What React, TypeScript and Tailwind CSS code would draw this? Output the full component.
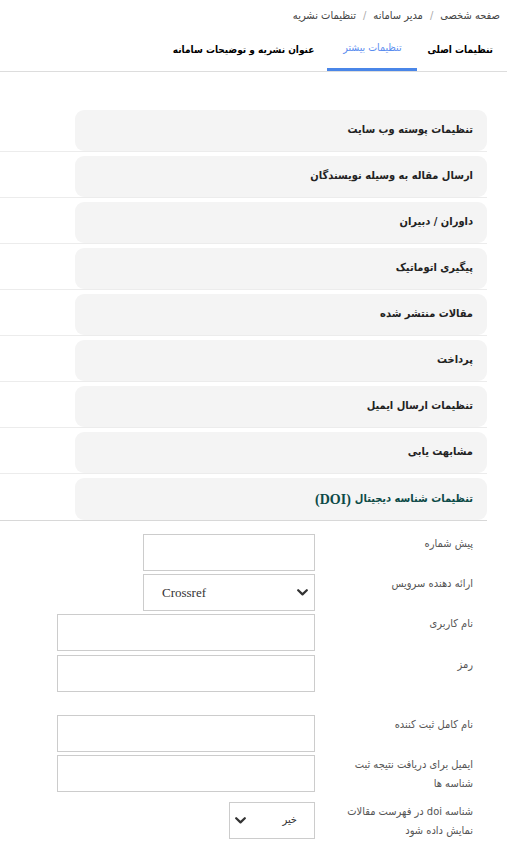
const SECTIONS = [
  'تنظیمات پوسته وب سایت',
  'ارسال مقاله به وسیله نویسندگان',
  'داوران / دبیران',
  'پیگیری اتوماتیک',
  'مقالات منتشر شده',
  'پرداخت',
  'تنظیمات ارسال ایمیل',
  'مشابهت یابی',
]

const font = { fontFamily: '"DejaVu Sans Condensed", "DejaVu Sans", Tahoma, sans-serif' }

function Chevron() {
  return (
    <svg width="11" height="7" viewBox="0 0 11 7" fill="none">
      <path d="M1.2 1.2 5.5 5.4 9.8 1.2" stroke="#333" strokeWidth="2.2" strokeLinecap="round" strokeLinejoin="round" />
    </svg>
  )
}

function Row({ label, children, className = '' }: { label: React.ReactNode; children: React.ReactNode; className?: string }) {
  return (
    <div className={`flex items-start ${className}`}>
      <div className="w-[172px] shrink-0 pr-[14px] pl-[30px] text-[11px] leading-[19px] text-[#555]">{label}</div>
      <div className="flex-1">{children}</div>
    </div>
  )
}

export default function App() {
  return (
    <div dir="rtl" className="w-[507px] min-h-[850px] bg-white text-[#222]" style={font}>
      {/* Breadcrumb */}
      <div className="pr-[7px] pt-[5px] h-[27px] text-[11px] text-[#444] flex items-center gap-[7px]">
        <span>صفحه شخصی</span>
        <span className="text-[#aaa]">/</span>
        <span>مدیر سامانه</span>
        <span className="text-[#aaa]">/</span>
        <span>تنظیمات نشریه</span>
      </div>

      {/* Tabs */}
      <div className="flex border-b border-[#ddd] h-[45px] items-stretch">
        <div className="pr-[14px] pl-[10px] flex items-center text-[10px] font-bold text-black">تنظیمات اصلی</div>
        <div className="w-[90px] flex items-center justify-center text-[10.5px] text-[#5b8def] border-b-[3px] border-[#4a86e8]">
          تنظیمات بیشتر
        </div>
        <div className="px-[13px] flex items-center text-[10px] font-bold text-black">عنوان نشریه و توضیحات سامانه</div>
      </div>

      {/* Sections */}
      <div className="mr-[20px] mt-[38px]">
        {SECTIONS.map(s => (
          <div key={s} className="mb-[4px]">
            <div className="ml-[75px] h-[41px] rounded-[9px] bg-[#f4f4f4] pr-[14px] flex items-center text-[11px] font-bold text-[#222]">
              {s}
            </div>
            <div className="h-px bg-[#ececec]" />
          </div>
        ))}
        <div className="ml-[75px] h-[42px] rounded-[9px] bg-[#f4f4f4] pr-[14px] flex items-center text-[11px] font-bold text-[#0c4a47]">
          <span>تنظیمات شناسه دیجیتال </span>
          <span className="mr-[4px]" style={{ fontFamily: '"Liberation Serif", serif', fontSize: '14px' }}>(DOI)</span>
        </div>
        <div className="h-px bg-[#d8d8d8]" />
      </div>

      {/* DOI form */}
      <div className="mt-[13px] pr-[20px]">
        <Row label="پیش شماره">
          <div className="w-[172px] h-[37px] border border-[#ccc]" />
        </Row>
        <Row label="ارائه دهنده سرویس" className="mt-[3px]">
          <div dir="ltr" className="w-[172px] h-[37px] border border-[#ccc] flex items-center justify-between pl-[18px] pr-[6px]">
            <span className="text-[13px] text-[#333]" style={{ fontFamily: '"Liberation Serif", serif' }}>Crossref</span>
            <Chevron />
          </div>
        </Row>
        <Row label="نام کاربری" className="mt-[3px]">
          <div className="w-[258px] h-[37px] border border-[#ccc]" />
        </Row>
        <Row label="رمز" className="mt-[4px]">
          <div className="w-[258px] h-[37px] border border-[#ccc]" />
        </Row>
        <Row label="نام کامل ثبت کننده" className="mt-[23px]">
          <div className="w-[258px] h-[37px] border border-[#ccc]" />
        </Row>
        <Row label="ایمیل برای دریافت نتیجه ثبت شناسه ها" className="mt-[3px]">
          <div className="w-[258px] h-[37px] border border-[#ccc]" />
        </Row>
        <Row label="شناسه doi در فهرست مقالات نمایش داده شود" className="mt-[9px]">
          <div className="w-[86px] h-[37px] border border-[#ccc] flex items-center justify-between pr-[17px] pl-[5px]">
            <span className="text-[11px] text-[#333]">خیر</span>
            <Chevron />
          </div>
        </Row>
      </div>
    </div>
  )
}
